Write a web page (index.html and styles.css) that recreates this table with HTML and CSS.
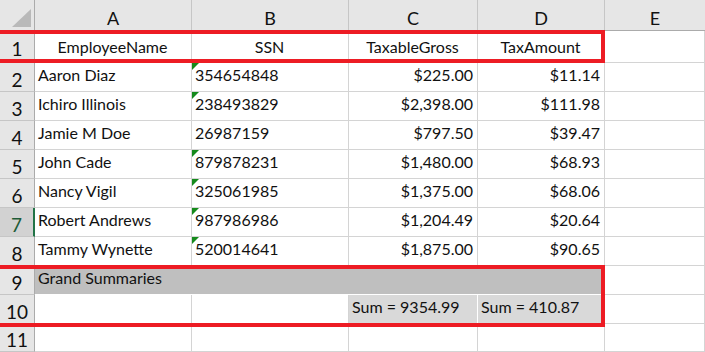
FILE: index.html
```html
<!DOCTYPE html>
<html lang="en">
<head>
    <meta charset="UTF-8">
    <title>Employees</title>
    <link rel="stylesheet" href="styles.css">
</head>
<body>
    <div class="sheet">
        <!-- column headers -->
        <div class="corner">
            <svg width="35" height="31" viewBox="0 0 35 31"><polygon points="31,9 31,27 12,27" fill="#b9b9b9"/></svg>
        </div>
        <div class="col-head">A</div>
        <div class="col-head">B</div>
        <div class="col-head">C</div>
        <div class="col-head">D</div>
        <div class="col-head last">E</div>

        <!-- row 1 -->
        <div class="row-head">1</div>
        <div class="cell hdr">EmployeeName</div>
        <div class="cell hdr">SSN</div>
        <div class="cell hdr">TaxableGross</div>
        <div class="cell hdr">TaxAmount</div>
        <div class="cell"></div>

        <div class="row-head">2</div>
        <div class="cell">Aaron Diaz</div>
        <div class="cell txt">354654848</div>
        <div class="cell num">$225.00</div>
        <div class="cell num">$11.14</div>
        <div class="cell"></div>

        <div class="row-head">3</div>
        <div class="cell">Ichiro Illinois</div>
        <div class="cell txt">238493829</div>
        <div class="cell num">$2,398.00</div>
        <div class="cell num">$111.98</div>
        <div class="cell"></div>

        <div class="row-head">4</div>
        <div class="cell">Jamie M Doe</div>
        <div class="cell">26987159</div>
        <div class="cell num">$797.50</div>
        <div class="cell num">$39.47</div>
        <div class="cell"></div>

        <div class="row-head">5</div>
        <div class="cell">John Cade</div>
        <div class="cell txt">879878231</div>
        <div class="cell num">$1,480.00</div>
        <div class="cell num">$68.93</div>
        <div class="cell"></div>

        <div class="row-head">6</div>
        <div class="cell">Nancy Vigil</div>
        <div class="cell txt">325061985</div>
        <div class="cell num">$1,375.00</div>
        <div class="cell num">$68.06</div>
        <div class="cell"></div>

        <div class="row-head active">7</div>
        <div class="cell">Robert Andrews</div>
        <div class="cell txt">987986986</div>
        <div class="cell num">$1,204.49</div>
        <div class="cell num">$20.64</div>
        <div class="cell"></div>

        <div class="row-head">8</div>
        <div class="cell">Tammy Wynette</div>
        <div class="cell txt">520014641</div>
        <div class="cell num">$1,875.00</div>
        <div class="cell num">$90.65</div>
        <div class="cell"></div>

        <div class="row-head">9</div>
        <div class="cell grand">Grand Summaries</div>
        <div class="cell"></div>

        <div class="row-head">10</div>
        <div class="cell"></div>
        <div class="cell"></div>
        <div class="cell sum">Sum = 9354.99</div>
        <div class="cell sum">Sum = 410.87</div>
        <div class="cell"></div>

        <div class="row-head">11</div>
        <div class="cell"></div>
        <div class="cell"></div>
        <div class="cell"></div>
        <div class="cell"></div>
        <div class="cell"></div>

        <!-- red annotation boxes -->
        <div class="mark mark-head"></div>
        <div class="mark mark-sum"></div>
    </div>
</body>
</html>
```

FILE: styles.css
```css
body {
    margin: 0;
    font-family: Lato, "Open Sans", sans-serif;
    background: #fff;
    overflow: hidden;
}

.sheet {
    position: relative;
    display: grid;
    grid-template-columns: 35px 157px 157px 129px 127px 1fr;
    grid-template-rows: 31px 32px repeat(9, 29px) 28px;
    width: 705px;
    height: 352px;
    color: #111;
}

.sheet > div {
    box-sizing: border-box;
}

/* headers ========================================================= */

.corner {
    background: #e6e6e6;
    border-right: 1px solid #ababab;
    border-bottom: 1px solid #ababab;
}

.corner svg {
    display: block;
}

.col-head {
    background: #e6e6e6;
    border-right: 1px solid #c6c6c6;
    border-bottom: 1px solid #ababab;
    font-size: 18px;
    display: flex;
    justify-content: center;
    align-items: flex-end;
    padding-bottom: 1px;
}

.col-head.last {
    border-right: none;
}

.row-head {
    background: #e6e6e6;
    border-right: 1px solid #ababab;
    border-bottom: 1px solid #c6c6c6;
    font-size: 19px;
    display: flex;
    justify-content: center;
    align-items: center;
    padding-top: 4px;
}

.row-head.active {
    background: #d2d2d2;
    color: #1e5b36;
    border-right: 2px solid #217346;
}

/* cells =========================================================== */

.cell {
    position: relative;
    border-right: 1px solid #d4d4d4;
    border-bottom: 1px solid #d4d4d4;
    font-size: 16px;
    display: flex;
    align-items: center;
    padding: 0 4px 5px 3px;
    white-space: nowrap;
}

.cell.hdr {
    justify-content: center;
    padding-bottom: 1px;
}

.cell.num {
    justify-content: flex-end;
}

.cell.txt::before {
    content: "";
    position: absolute;
    left: 0;
    top: 0;
    border-top: 7px solid #158a1c;
    border-right: 7px solid transparent;
}

.cell.grand {
    grid-column: span 4;
    background: #bfbfbf;
    border-right: none;
    border-bottom: 1px solid #fff;
}

.cell.sum {
    background: #d9d9d9;
    border-right: 1px solid #fff;
}

/* red annotation boxes ============================================ */

.mark {
    position: absolute;
    left: -4px;
    width: 609px;
    border: 4px solid #ed1c24;
    box-sizing: border-box;
}

.mark-head {
    top: 30px;
    height: 33px;
}

.mark-sum {
    top: 265px;
    height: 62px;
}
```
